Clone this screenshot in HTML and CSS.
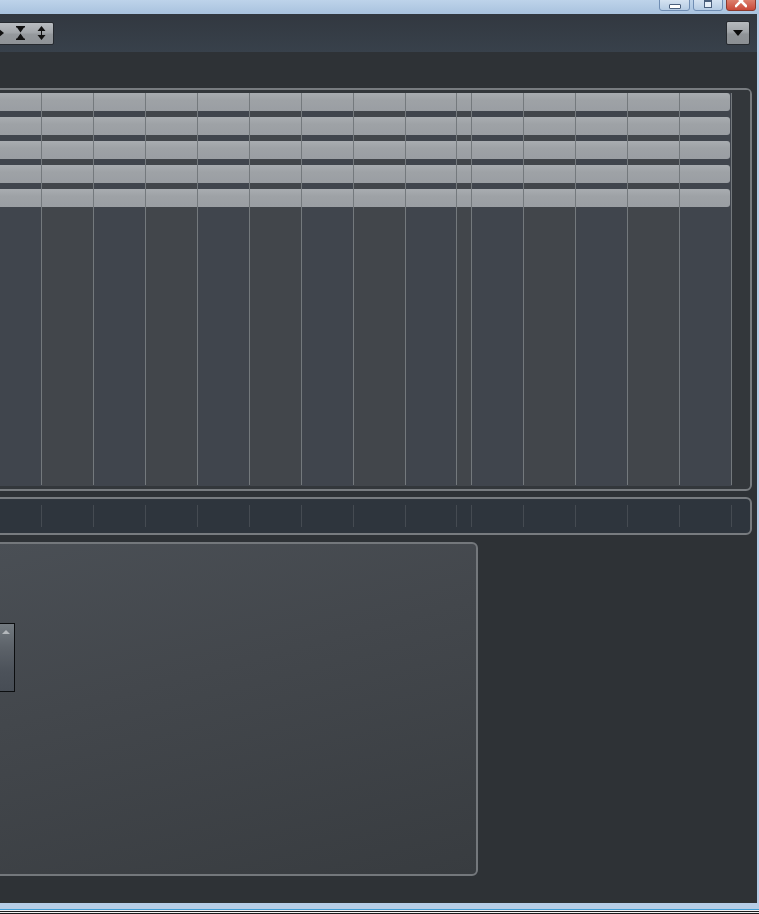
FILE: index.html
```html
<!doctype html>
<html lang="en">
<head>
  <meta charset="UTF-8">
  <title>Project Window</title>
  <link rel="stylesheet" href="styles.css">
</head>
<body>
  <div class="titlebar">
    <div class="win-btn win-min"><span class="glyph-min"></span></div>
    <div class="win-btn win-max"><span class="glyph-max"></span></div>
    <div class="win-btn win-close">
      <svg width="12" height="10" viewBox="0 0 12 10"><path d="M1 -2 L11 8 M11 -2 L1 8" stroke="#fff" stroke-width="2.6" stroke-linecap="square"/></svg>
    </div>
  </div>

  <div class="frame">
    <div class="toolbar">
      <div class="tool-group">
        <span class="tool tool-play">
          <svg width="6" height="8" viewBox="0 0 6 8"><path d="M0 0 L5 4 L0 8 Z" fill="#111"/></svg>
        </span>
        <span class="tool">
          <svg width="9" height="14" viewBox="0 0 9 14"><path d="M0 0 H9 V1.5 H8 L4.5 6.5 L1 1.5 H0 Z M0 14 H9 V12.5 H8 L4.5 7.5 L1 12.5 H0 Z" fill="#111"/></svg>
        </span>
        <span class="tool">
          <svg width="9" height="14" viewBox="0 0 9 14"><path d="M4.5 0 L8.5 5 H0.5 Z M4 5 H5 V9 H4 Z M0.5 9 H8.5 L4.5 14 Z" fill="#111"/></svg>
        </span>
      </div>
      <div class="tool-drop">
        <svg width="10" height="6" viewBox="0 0 10 6"><path d="M0 0 H10 L5 6 Z" fill="#0c0c0c"/></svg>
      </div>
    </div>

    <div class="workspace">
      <div class="arrange">
        <div class="layer cols">
          <div class="col"></div><div class="col alt"></div><div class="col"></div><div class="col alt"></div>
          <div class="col"></div><div class="col alt"></div><div class="col"></div><div class="col alt"></div>
          <div class="col"></div><div class="col alt"></div><div class="col"></div><div class="col alt"></div>
          <div class="col"></div><div class="col alt"></div><div class="col"></div><div class="col end"></div>
        </div>
        <div class="layer tracks">
          <div class="track"></div>
          <div class="track"></div>
          <div class="track"></div>
          <div class="track"></div>
          <div class="track"></div>
        </div>
        <div class="layer lines">
          <div class="line"></div><div class="line"></div><div class="line"></div><div class="line"></div>
          <div class="line"></div><div class="line"></div><div class="line"></div><div class="line"></div>
          <div class="line"></div><div class="line"></div><div class="line"></div><div class="line"></div>
          <div class="line"></div><div class="line"></div><div class="line"></div><div class="line last"></div>
        </div>
      </div>

      <div class="ruler">
        <div class="tick"></div><div class="tick"></div><div class="tick"></div><div class="tick"></div>
        <div class="tick"></div><div class="tick"></div><div class="tick"></div><div class="tick"></div>
        <div class="tick"></div><div class="tick"></div><div class="tick"></div><div class="tick"></div>
        <div class="tick"></div><div class="tick"></div><div class="tick"></div><div class="tick last"></div>
      </div>

      <div class="lower">
        <div class="scroller">
          <span class="arrow-up"></span>
        </div>
      </div>
    </div>
  </div>

  <div class="bottom-frame">
    <div class="edge edge-blue"></div>
    <div class="edge edge-light"></div>
    <div class="edge edge-dark"></div>
    <div class="edge edge-light"></div>
    <div class="edge edge-dark"></div>
  </div>
</body>
</html>
```

FILE: styles.css
```css
body {
    margin: 0;
    width: 759px;
    height: 914px;
    overflow: hidden;
    background: #b3cbe5;
    font-family: "Liberation Sans", Arial, sans-serif;
}

/* window chrome */

.titlebar {
    height: 14px;
    background: linear-gradient(#bdd3ea, #a8c2de);
    display: flex;
    justify-content: flex-end;
    gap: 3px;
    padding-right: 3px;
}

.win-btn {
    width: 30px;
    height: 14px;
    margin-top: -3px;
    box-sizing: border-box;
    border: 1px solid #6f8db3;
    border-radius: 0 0 3px 3px;
    background: linear-gradient(#dbe7f4, #b5cbe3);
    display: flex;
    justify-content: center;
    align-items: center;
    overflow: hidden;
}

.win-min {
    width: 31px;
}

.win-close {
    border-color: #8b3a2e;
    background: linear-gradient(#e08a78, #c8493a);
    align-items: flex-start;
}

.glyph-min {
    width: 10px;
    height: 3px;
    margin-top: 4px;
    background: #fff;
    border: 1px solid #4a5f7c;
    border-radius: 1px;
}

.glyph-max {
    width: 6px;
    height: 5px;
    margin-top: -1px;
    border: 1px solid #4a5f7c;
    border-top-width: 2px;
    background: #e6eef7;
}

.frame {
    height: 889px;
    margin-right: 2px;
    background: #2e3236;
    display: flex;
    flex-direction: column;
}

/* toolbar */

.toolbar {
    height: 38px;
    flex-shrink: 0;
    background: linear-gradient(#323840, #38414b);
    display: flex;
    align-items: center;
    justify-content: space-between;
    padding-right: 7px;
}

.tool-group {
    height: 23px;
    margin-left: -10px;
    padding-left: 8px;
    padding-right: 7px;
    box-sizing: border-box;
    border: 1px solid #262a2f;
    border-radius: 2px;
    background: linear-gradient(#b9bdc1, #a3a7ab 45%, #94989c 55%, #8f9397);
    display: flex;
    align-items: center;
    gap: 12px;
}

.tool {
    display: flex;
    align-items: center;
    justify-content: center;
    width: 9px;
}

.tool-play {
    width: 6px;
    margin-right: -1px;
}

.tool-drop {
    width: 24px;
    height: 24px;
    box-sizing: border-box;
    border: 1px solid #262a2f;
    border-radius: 2px;
    background: linear-gradient(#b6babe, #a0a4a8 45%, #8f9397 55%, #8b8f93);
    display: flex;
    align-items: center;
    justify-content: center;
}

/* project area */

.workspace {
    padding-top: 36px;
    padding-right: 5px;
    margin-left: -10px;
    display: flex;
    flex-direction: column;
}

.arrange {
    height: 403px;
    box-sizing: border-box;
    border: 2px solid #787c80;
    border-radius: 0 6px 6px 0;
    background: #33373b;
    display: grid;
    overflow: hidden;
}

.layer {
    grid-area: 1 / 1;
    display: grid;
    grid-template-columns: 50px repeat(7, 52px) 51px 15px repeat(5, 52px) 1fr;
}

.cols .col {
    background: #40454d;
    border-top: 3px solid #33373b;
    margin-bottom: 3px;
}

.cols .alt {
    background: #42464b;
}

.cols .end {
    background: #33373b;
}

.tracks {
    padding-top: 3px;
    grid-template-rows: repeat(5, 18px);
    row-gap: 6px;
    align-content: start;
}

.track {
    grid-column: 1 / 16;
    margin-right: 2px;
    border-radius: 0 3px 3px 0;
    background: linear-gradient(#a9adb1, #9ea2a6 40%, #9a9ea3);
}

.lines {
    padding-top: 3px;
    padding-bottom: 4px;
}

.line {
    border-right: 1px solid #74797d;
}

.line.last {
    border-right: none;
}

.ruler {
    margin-top: 6px;
    height: 38px;
    box-sizing: border-box;
    border: 2px solid #787c80;
    border-radius: 0 6px 6px 0;
    background: #2e353d;
    padding: 6px 0;
    display: grid;
    grid-template-columns: 50px repeat(7, 52px) 51px 15px repeat(5, 52px) 1fr;
}

.tick {
    border-right: 1px solid #454b52;
}

.tick.last {
    border-right: none;
}

.lower {
    margin-top: 7px;
    width: 488px;
    height: 334px;
    box-sizing: border-box;
    border: 2px solid #74787c;
    border-radius: 0 6px 6px 0;
    background: linear-gradient(165deg, #4a4f55, #43474c 40%, #383c40);
}

.scroller {
    margin-top: 79px;
    width: 23px;
    height: 69px;
    box-sizing: border-box;
    border: 1px solid #0c0e10;
    background: linear-gradient(#737a80, #5c6269 35%, #4c525a 70%, #474d55);
    display: flex;
    justify-content: flex-end;
    padding: 6px 4px 0 0;
}

.arrow-up {
    width: 0;
    height: 0;
    border-left: 4px solid transparent;
    border-right: 4px solid transparent;
    border-bottom: 4px solid #b3b7bb;
}

/* bottom window border */

.bottom-frame {
    display: flex;
    flex-direction: column;
    padding-top: 6px;
    background: #b6cde6;
}

.edge {
    height: 1px;
}

.edge-blue {
    background: #3f9dd3;
}

.edge-light {
    background: #f2f2f2;
}

.edge-dark {
    background: #1c1c1c;
}
```
